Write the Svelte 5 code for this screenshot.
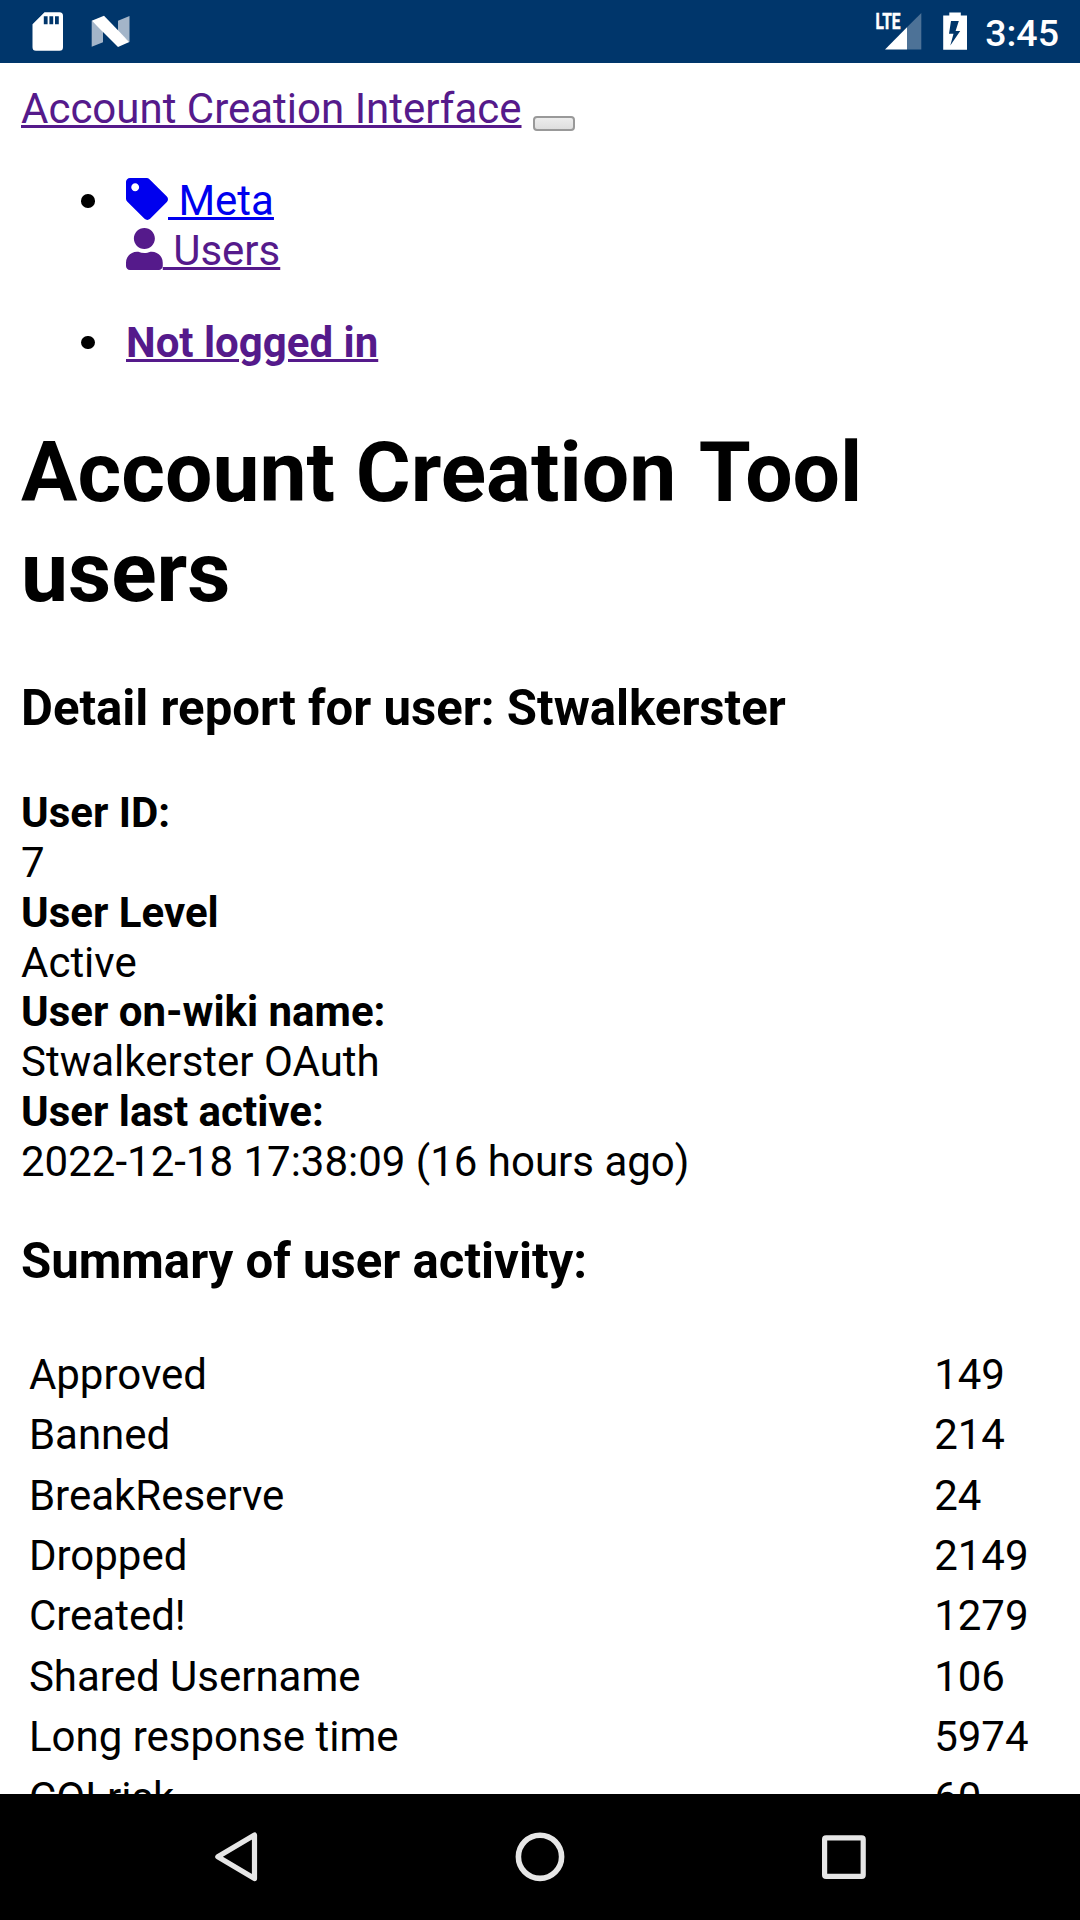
<script>
  const details = [
    ['User ID:', '7'],
    ['User Level', 'Active'],
    ['User on-wiki name:', 'Stwalkerster OAuth'],
    ['User last active:', '2022-12-18 17:38:09 (16 hours ago)'],
  ];

  const activity = [
    ['Approved', 149],
    ['Banned', 214],
    ['BreakReserve', 24],
    ['Dropped', 2149],
    ['Created!', 1279],
    ['Shared Username', 106],
    ['Long response time', 5974],
    ['COI risk', 60],
  ];
</script>

<div class="screen">
  <header class="status">
    <svg class="left" width="100" height="63" viewBox="32 0 100 63" aria-hidden="true">
      <path
        fill="#fff"
        fill-rule="evenodd"
        d="M44.5 12.3H59.5a3.5 3.5 0 0 1 3.5 3.5V47.2a3.5 3.5 0 0 1-3.5 3.5H36a3.5 3.5 0 0 1-3.5-3.5V24.2ZM43.8 16.3v8h3.8v-8ZM49.4 16.3v8h3.8v-8ZM55 16.3v8h3.8v-8Z"
      />
      <path fill="#a3b5c9" d="M91.7 20.7L103 31V42.3L91.7 46.8ZM118 20.8L129.5 16V42L118 32Z" />
      <path fill="#fff" d="M91.7 20.7L104 15.7L129.3 42L118 47Z" />
    </svg>
    <div class="right">
      <svg width="92" height="63" viewBox="876 0 92 63" aria-hidden="true">
        <path fill="#4d7297" d="M921.3 13V49.5H907V27.3Z" />
        <path fill="#fff" d="M907 27.3V49.5H885Z" />
        <text x="875.5" y="29" textLength="25" lengthAdjust="spacingAndGlyphs">LTE</text>
        <path
          fill="#fff"
          fill-rule="evenodd"
          d="M949.3 12.5h11.5v3H967V49.7H943.2V15.5h6.1ZM951 21L949 33.7H953.5L950.3 45.5L960.2 31H955.6L958.8 21Z"
        />
      </svg>
      <span class="time">3:45</span>
    </div>
  </header>

  <main>
    <nav>
      <div>
        <a class="visited" href="#home">Account Creation Interface</a>
        <button type="button" aria-label="Toggle navigation"></button>
      </div>
      <ul>
        <li>
          <div>
            <a href="#meta"><svg class="icon tag" viewBox="0 0 512 512" aria-hidden="true"><path fill="currentColor" d="M0 252.118V48C0 21.49 21.49 0 48 0h204.118a48 48 0 0 1 33.941 14.059l211.882 211.882c18.745 18.745 18.745 49.137 0 67.882L293.823 497.941c-18.745 18.745-49.137 18.745-67.882 0L14.059 286.059A48 48 0 0 1 0 252.118zM112 64c-26.51 0-48 21.49-48 48s21.49 48 48 48 48-21.49 48-48-21.49-48-48-48z" /></svg>&nbsp;Meta</a>
          </div>
          <div>
            <a class="visited" href="#users"><svg class="icon user" viewBox="0 0 448 512" aria-hidden="true"><path fill="currentColor" d="M224 256c70.7 0 128-57.3 128-128S294.7 0 224 0 96 57.3 96 128s57.3 128 128 128zm89.6 32h-16.7c-22.2 10.2-46.9 16-72.9 16s-50.6-5.8-72.9-16h-16.7C60.2 288 0 348.2 0 422.4V464c0 26.5 21.5 48 48 48h352c26.5 0 48-21.5 48-48v-41.6c0-74.2-60.2-134.4-134.4-134.4z" /></svg>&nbsp;Users</a>
          </div>
        </li>
      </ul>
      <ul>
        <li><div><a class="visited strong" href="#login">Not logged in</a></div></li>
      </ul>
    </nav>

    <h1>Account Creation <span class="tool"><span class="cap">T</span>ool</span> users</h1>
    <h3>Detail report for user: Stwalkerster</h3>
    <div class="details">
      {#each details as [label, value]}
        <div class="strong">{label}</div>
        <div>{value}</div>
      {/each}
    </div>

    <h3 class="summary">Summary of user activity:</h3>
    <div class="activity">
      {#each activity as [label, count]}
        <div>{label}</div>
        <div>{count}</div>
      {/each}
    </div>
  </main>

  <footer>
    <svg width="1080" height="126" viewBox="0 1794 1080 126" fill="none" stroke="#e6e6e6" aria-hidden="true">
      <path stroke-width="5.2" stroke-linejoin="round" d="M217.8 1856.8L254.5 1835V1878.6Z" />
      <circle cx="540" cy="1856.8" r="21.6" stroke-width="5.6" />
      <rect x="824.6" y="1837.8" width="38.6" height="38.6" rx="1.5" stroke-width="5.2" />
    </svg>
  </footer>
</div>

<style>
  :global(body) {
    margin: 0;
    background: #fff;
  }

  .screen {
    display: flex;
    flex-direction: column;
    width: 1080px;
    height: 1920px;
    overflow: hidden;
    color: #000;
    font-family: Roboto, sans-serif;
    font-size: 42px;
    line-height: 49.875px;
  }

  .status {
    display: flex;
    flex: none;
    justify-content: space-between;
    height: 63px;
    padding: 0 21px 0 32px;
    background: #00366b;
    color: #fff;
  }

  .status svg {
    display: block;
    overflow: visible;
  }

  .status text {
    fill: #fff;
    stroke: #fff;
    stroke-width: 0.5px;
    font-size: 21.5px;
    font-weight: 700;
  }

  .right {
    display: flex;
    gap: 17px;
  }

  .time {
    font-size: 37.5px;
    font-weight: 500;
    line-height: 66px;
  }

  main {
    flex: 1;
    min-height: 0;
    padding: 21px 21px 0;
    overflow: hidden;
  }

  a {
    color: #0000ee;
    text-decoration: underline;
    text-decoration-thickness: 2.6px;
    text-underline-offset: 2px;
  }

  .visited {
    color: #551a8b;
  }

  .strong {
    font-weight: 700;
  }

  button {
    box-sizing: border-box;
    width: 42px;
    height: 15px;
    margin: 0 0 0 1px;
    padding: 0;
    border: 2.6px solid #999;
    border-radius: 4px;
    background: linear-gradient(#ededed, #dedede);
    vertical-align: -6px;
  }

  ul {
    margin: 42px 0;
    padding-left: 60px;
    list-style: none;
  }

  li {
    display: grid;
    grid-template-columns: 13.5px 1fr;
    column-gap: 31.5px;
  }

  li::before {
    width: 13.5px;
    height: 13.5px;
    margin-top: 18.3px;
    border-radius: 50%;
    background: #000;
    content: '';
  }

  li div {
    grid-column: 2;
  }

  .icon {
    height: 42px;
    overflow: visible;
    vertical-align: -5.25px;
  }

  .tag {
    width: 42px;
  }

  .user {
    width: 36.75px;
  }

  h1 {
    margin: 55.28px 0 57.3px;
    font-size: 84px;
    line-height: 99.75px;
  }

  .tool {
    margin-left: 1.6px;
  }

  .cap {
    letter-spacing: -5.6px;
  }

  h3 {
    margin: 50.2px 0 50.6px;
    font-size: 49.14px;
    line-height: 57.75px;
  }

  .summary {
    margin: 45.8px 0 51.6px;
  }

  .activity {
    display: grid;
    grid-template-columns: 1fr 117px;
    row-gap: 10.5px;
    padding: 7.875px;
  }

  footer {
    flex: none;
    height: 126px;
    background: #000;
  }
</style>
